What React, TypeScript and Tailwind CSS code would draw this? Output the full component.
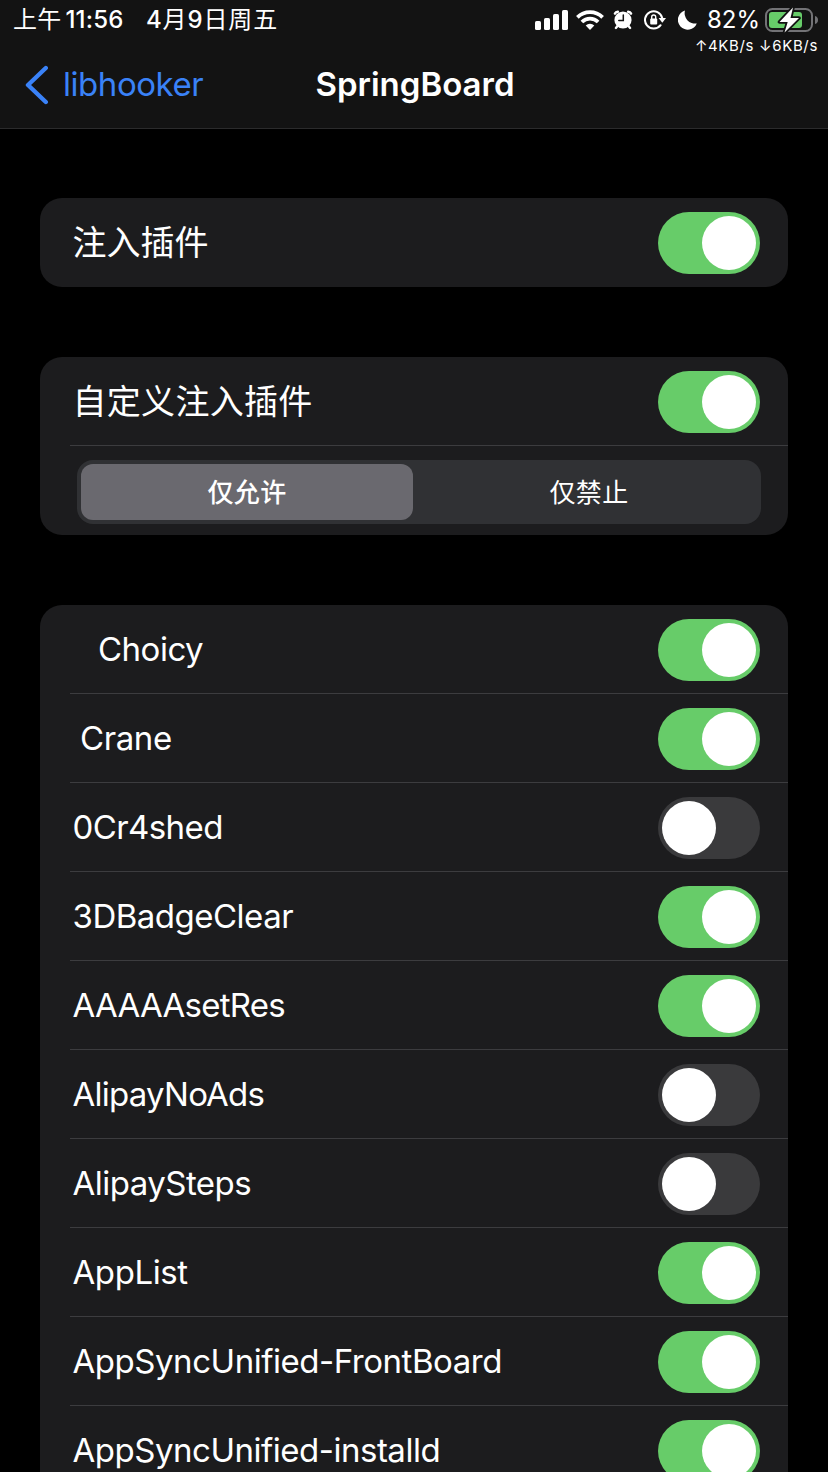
import React, { useState } from "react";

const latin = "font-['Inter','Noto_Sans_CJK_SC',sans-serif]";

function Toggle({ initial }: { initial: boolean }) {
  const [on, setOn] = useState(initial);
  return (
    <button
      type="button"
      role="switch"
      aria-checked={on}
      onClick={() => setOn(!on)}
      className={`mt-[2px] flex h-[62px] w-[102px] shrink-0 items-center rounded-full px-1 ${
        on ? "justify-end bg-[#67cc69]" : "justify-start bg-[#3a3a3c]"
      }`}
    >
      <span className="size-[54px] rounded-full bg-white" />
    </button>
  );
}

function Row({ label, on, style = "", last = false }: { label: string; on: boolean; style?: string; last?: boolean }) {
  return (
    <div className={`ml-[30px] flex h-[89px] shrink-0 items-center justify-between border-b pr-7 pl-[2.5px] ${last ? "border-transparent" : "border-[#3c3c3f]"}`}>
      <span className={`leading-10 whitespace-pre ${style}`}>{label}</span>
      <Toggle initial={on} />
    </div>
  );
}

const tweaks = [
  { label: "Choicy", on: true, style: "text-[33px] pl-[25.5px] tracking-[-0.5px]" },
  { label: "Crane", on: true, style: "text-[33px] pl-[7.5px] tracking-[-0.4px]" },
  { label: "0Cr4shed", on: false, style: "text-[33px] tracking-[-0.6px]" },
  { label: "3DBadgeClear", on: true, style: "text-[33px] tracking-[-0.5px]" },
  { label: "AAAAAsetRes", on: true, style: "text-[33px] tracking-[-0.75px]" },
  { label: "AlipayNoAds", on: false, style: "text-[33px] tracking-[-0.75px]" },
  { label: "AlipaySteps", on: false, style: "text-[33px] tracking-[-0.52px]" },
  { label: "AppList", on: true, style: "text-[33px] tracking-[-0.4px]" },
  { label: "AppSyncUnified-FrontBoard", on: true, style: "text-[33px] tracking-[-0.46px]" },
  { label: "AppSyncUnified-installd", on: true, style: "text-[33px] tracking-[-0.48px]" },
];

function Signal() {
  return (
    <svg className="mr-[8px] h-5 w-[33px]" viewBox="0 0 33 20" fill="#fff">
      <rect x="0" y="11" width="6" height="9" rx="1.6" />
      <rect x="9" y="8" width="6" height="12" rx="1.6" />
      <rect x="18" y="4" width="6" height="16" rx="1.6" />
      <rect x="27" y="0" width="6" height="20" rx="1.6" />
    </svg>
  );
}

function Wifi() {
  return (
    <svg className="mr-[9px] h-5 w-7" viewBox="0 0 28 20" fill="none" stroke="#fff" strokeWidth="3.8">
      <path d="M1.4 7.3a18 18 0 0 1 25.2 0" />
      <path d="M5.9 12a11.6 11.6 0 0 1 16.2 0" />
      <path d="M14 20l-4.3-4.4a6.2 6.2 0 0 1 8.6 0z" fill="#fff" stroke="none" />
    </svg>
  );
}

function Alarm() {
  return (
    <svg className="mr-[11px] h-5 w-5" viewBox="0 0 20 20" fill="none" strokeLinecap="round">
      <path d="M2 3.6A3 3 0 0 1 4.8 1.8M18 3.6A3 3 0 0 0 15.2 1.8" stroke="#fff" strokeWidth="2.6" />
      <path d="M4.5 16l-1.6 1.9M15.5 16l1.6 1.9" stroke="#fff" strokeWidth="2.4" />
      <circle cx="10" cy="10" r="8.6" fill="#fff" />
      <path d="M10.3 5v5.6H5.8" stroke="#131313" strokeWidth="1.5" />
    </svg>
  );
}

function RotationLock() {
  return (
    <svg className="mr-[12px] h-5 w-[22px]" viewBox="0 0 22 20" fill="none">
      <path d="M16.6 15.2A8.7 8.7 0 1 1 18.2 8" stroke="#fff" strokeWidth="2" strokeLinecap="round" />
      <path d="M14.6 8h7.4l-3.7 4.8z" fill="#fff" />
      <rect x="6.2" y="8.6" width="7" height="6" rx="1" fill="#fff" />
      <path d="M7.7 9V7a2 2 0 0 1 4 0v2" stroke="#fff" strokeWidth="1.4" />
    </svg>
  );
}

function Moon() {
  return (
    <svg className="mr-[10px] h-5 w-[19px]" viewBox="0 0 19 20" fill="#fff">
      <path d="M7 .4A10.4 10.4 0 0 0 18.8 13.4 9.8 9.8 0 1 1 7 .4z" />
    </svg>
  );
}

function Battery() {
  return (
    <svg className="h-[26px] w-[54px]" viewBox="0 0 54 26">
      <rect x="1" y="2" width="46" height="22" rx="6.5" fill="none" stroke="#737376" strokeWidth="2" />
      <path d="M50 9c2 .6 3 2 3 4s-1 3.4-3 4z" fill="#737376" />
      <rect x="4" y="5" width="33" height="16" rx="3" fill="#67cc69" />
      <path d="M28 .5L14.5 15h8.2L19.5 25.5 34 11h-8.5z" fill="#fff" stroke="#131313" strokeWidth="3.6" strokeLinejoin="round" paintOrder="stroke" />
    </svg>
  );
}

export default function App() {
  const [segment, setSegment] = useState(0);
  return (
    <main className={`flex h-[1472px] w-[828px] flex-col overflow-hidden bg-black text-white ${latin}`}>
      <header className="flex h-[129px] shrink-0 flex-col border-b border-[#2b2b2c] bg-[#131313]">
        <div className="flex h-10 items-center justify-between pr-[9px] pl-[13px]">
          <div className="flex text-[24px] whitespace-pre">
            <span className="w-[133px] tracking-[0.2px]">上午<span className="pl-[4px] font-medium">11:56</span></span>
            <span className="tracking-[0.85px]"><span className="font-medium">4</span>月<span className="font-medium">9</span>日周五</span>
          </div>
          <div className="flex items-center">
            <Signal />
            <Wifi />
            <Alarm />
            <RotationLock />
            <Moon />
            <span className="w-[58px] text-[24px] whitespace-nowrap">82%</span>
            <Battery />
          </div>
        </div>
        <div className="flex h-3 items-center justify-end pr-[10px] text-[15px] leading-3 tracking-[0.65px] whitespace-pre">↑4KB/s ↓6KB/s</div>
        <nav className="grid h-[66px] grid-cols-[1fr_auto_1fr] items-center">
          <a className="flex items-center pl-[25px] text-[#3a82f7]">
            <svg className="h-10 w-6" viewBox="0 0 24 40" fill="none" stroke="currentColor" strokeWidth="4.4" strokeLinecap="round" strokeLinejoin="round">
              <path d="M20.8 3L3 20l17.8 17" />
            </svg>
            <span className="pl-[14px] text-[33px] tracking-[-0.45px]">libhooker</span>
          </a>
          <h1 className="pl-[2px] text-[33px] font-semibold">SpringBoard</h1>
          <span />
        </nav>
      </header>

      <section className="mx-10 mt-[69px] shrink-0 rounded-[22px] bg-[#1c1c1e]">
        <Row label="注入插件" on last style="text-[34px] pt-px" />
      </section>

      <section className="mx-10 mt-[70px] h-[178px] shrink-0 rounded-[22px] bg-[#1c1c1e]">
        <Row label="自定义注入插件" on style="text-[34px] pt-px tracking-[0.3px]" />
        <div className="mt-[14px] mr-[27px] ml-[37px] grid h-16 grid-cols-[332px_1fr] rounded-2xl bg-[#303134] p-1 text-[26px] tracking-[0.3px]">
          {["仅允许", "仅禁止"].map((name, i) => (
            <button
              key={name}
              type="button"
              onClick={() => setSegment(i)}
              className={`rounded-xl ${i === 1 ? "ml-2" : ""} ${segment === i ? "bg-[#6a696f] font-medium" : ""}`}
            >
              {name}
            </button>
          ))}
        </div>
      </section>

      <section className="mx-10 mt-[70px] shrink-0 rounded-t-[22px] bg-[#1c1c1e]">
        {tweaks.map((t) => (
          <Row key={t.label} {...t} />
        ))}
      </section>
    </main>
  );
}
